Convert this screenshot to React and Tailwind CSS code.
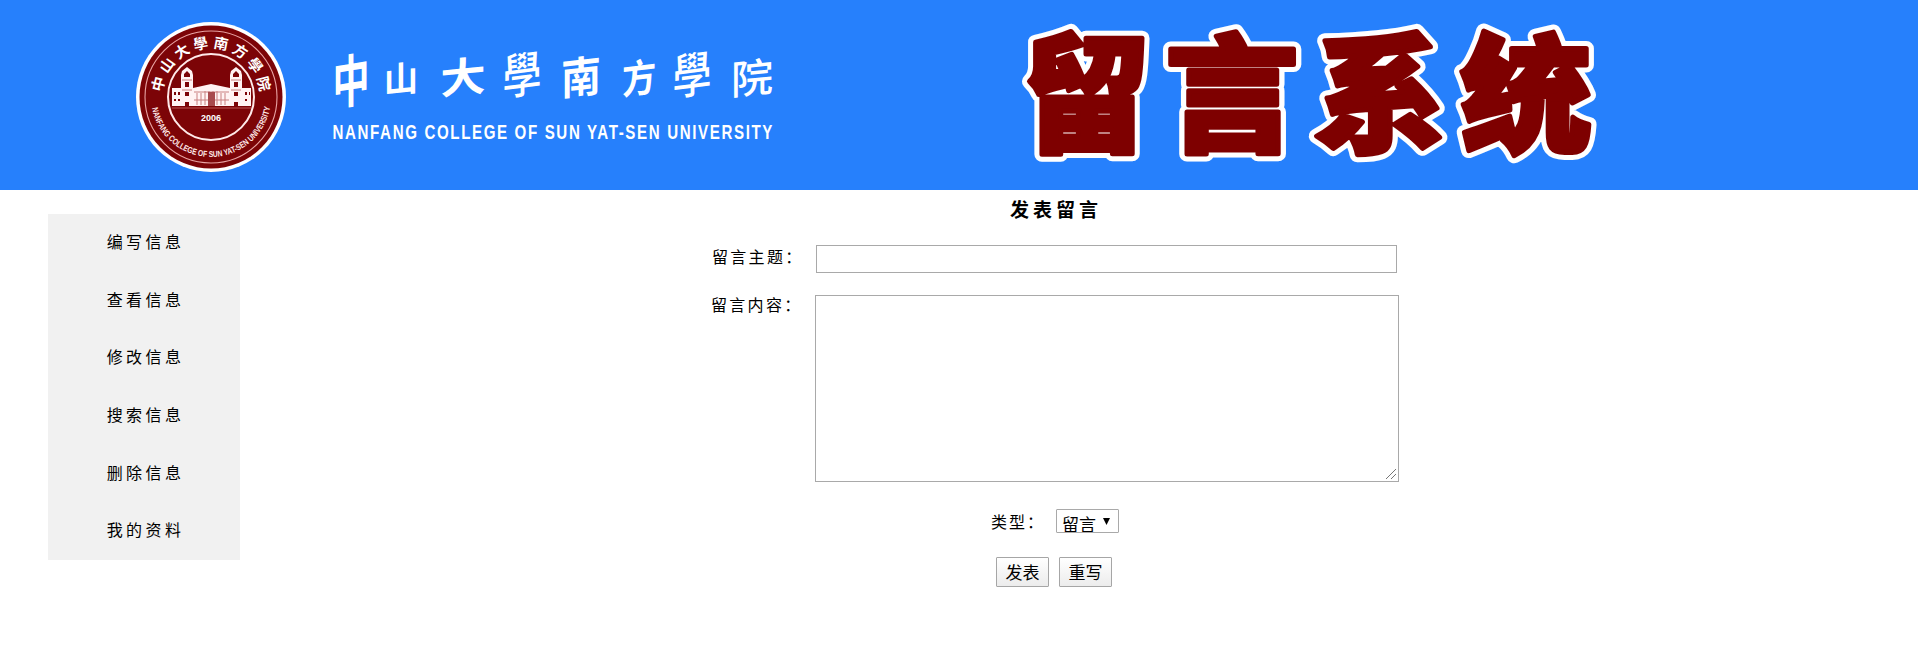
import React from "react";

const menu = ["编写信息", "查看信息", "修改信息", "搜索信息", "删除信息", "我的资料"];

function Seal() {
  return (
    <svg className="block h-[152px] w-[152px]" viewBox="-76 -76 152 152">
      <defs>
        <path id="sealBottom" d="M-60 0 A60 60 0 0 0 60 0" />
      </defs>
      <circle r="75" fill="#fff" />
      <circle r="71.5" fill="#7c0407" />
      <circle r="66" fill="none" stroke="#e9a4a4" strokeWidth="1.1" />
      <circle r="43" fill="#7c0407" stroke="#ffe9e9" strokeWidth="2" />
      {["中", "山", "大", "學", "南", "方", "學", "院"].map((c, i) => (
        <text
          key={i}
          transform={`rotate(${-76 + i * 21.7}) translate(0 -49)`}
          textAnchor="middle"
          fill="#fff"
          fontSize="14.5"
          fontWeight="700"
          fontFamily="Noto Sans CJK TC, sans-serif"
        >
          {c}
        </text>
      ))}
      <text fill="#ffe9e9" fontSize="8.5" fontWeight="700" fontFamily="Liberation Sans, sans-serif">
        <textPath href="#sealBottom" startOffset="11" textLength="167" lengthAdjust="spacingAndGlyphs">
          NANFANG COLLEGE OF SUN YAT-SEN UNIVERSITY
        </textPath>
      </text>
      <path
        fill="#fff3f3"
        d="M-39 -9H-30V-22L-29 -26L-24 -30L-19 -26L-18 -22V-9L0 -13L19 -9V-22L20 -26L25 -30L30 -26L31 -22V-9H40V9H-39Z"
      />
      <g fill="#7c0407">
        <path d="M-27 -20v-3l3-3 3 3v3zM22 -20v-3l3-3 3 3v3z" />
        <path d="M-26 -15h4v5h-4zM23 -15h4v5h-4zM-37 -5h2v3h-2zM-33 -5h2v3h-2zM-37 2h2v2h-2zM-33 2h2v2h-2zM-26 -5h4v4h-4zM-26 5h4v4h-4zM23 -5h4v4h-4zM23 5h4v4h-4zM34 -5h2v3h-2zM38 -5h1v3h-1zM34 2h2v2h-2z" />
      </g>
      <path
        fill="none"
        stroke="#c98080"
        d="M-17 -5H18M-14 -4V8M-10 -4V8M14 -4V8M10 -4V8M-6 -6V8M-2 -6V8M2 -6V8M6 -6V8M-29 -17H-19M20 -17H30M-29 -7H-19M20 -7H30M-17 3H18"
      />
      <path d="M-3 -5H4V9H-3Z" fill="#a84a4d" />
      <path d="M-39 11H40" stroke="#b55" strokeWidth="1" />
      <text y="24" textAnchor="middle" fill="#fff" fontSize="9" fontWeight="700" fontFamily="Liberation Sans, sans-serif">
        2006
      </text>
    </svg>
  );
}

const nameGlyphs = [
  ["中", 31, 81, 39, 0.95, 1.45, 700],
  ["山", 81, 79, 35, 0.98, 1, 700],
  ["大", 143, 77, 42, 1.08, 0.98, 700],
  ["學", 202, 75, 39, 1, 1.25, 500],
  ["南", 261, 77, 38, 1.05, 1.15, 700],
  ["方", 319, 78, 36, 0.95, 1.08, 700],
  ["學", 372, 75, 39, 1, 1.25, 500],
  ["院", 432, 78, 40, 1.05, 1, 500],
];

function SchoolName() {
  return (
    <svg className="block h-[190px] w-[470px]" viewBox="0 0 470 190" fill="#fff">
      {nameGlyphs.map(([c, x, y, size, sx, sy, weight], i) => (
        <text
          key={i}
          transform={`translate(${x} ${y}) scale(${sx} ${sy}) skewY(-6)`}
          y={size * 0.37}
          textAnchor="middle"
          fontSize={size}
          fontWeight={weight}
          fontFamily="Noto Sans CJK TC, sans-serif"
        >
          {c}
        </text>
      ))}
      <text
        transform="translate(12.5 139) scale(0.72 1)"
        fontSize="21"
        fontWeight="700"
        fontFamily="Liberation Sans, sans-serif"
        textLength="611"
        lengthAdjust="spacing"
      >
        NANFANG COLLEGE OF SUN YAT-SEN UNIVERSITY
      </text>
    </svg>
  );
}

const titleGlyphs = [
  ["留", 76, 1],
  ["言", 222, 1.05],
  ["系", 370, 1.04],
  ["统", 516, 1.03],
];

function TitleLayer({ color, width }) {
  return (
    <g fill={color} stroke={color} strokeWidth={width}>
      {titleGlyphs.map(([c, x, sx]) => (
        <text key={c} transform={`translate(${x} 142) scale(${sx} 1)`}>
          {c}
        </text>
      ))}
    </g>
  );
}

function SystemTitle() {
  return (
    <svg
      className="block h-[190px] w-[600px]"
      viewBox="0 0 600 190"
      fontFamily="Noto Sans CJK SC, sans-serif"
      fontWeight="900"
      fontSize="127"
      textAnchor="middle"
      strokeLinejoin="round"
    >
      <TitleLayer color="#fff" width="15" />
      <TitleLayer color="#7e0000" width="5" />
    </svg>
  );
}

export default function App() {
  return (
    <div className="h-[656px] w-[1918px] overflow-hidden bg-white font-['Noto_Sans_CJK_SC',sans-serif] text-black">
      <header className="flex h-[190px] items-start bg-[#2680fc]">
        <div className="ml-[135px] mt-[21px] w-[152px]">
          <Seal />
        </div>
        <div className="ml-[33px]">
          <SchoolName />
        </div>
        <div className="ml-[220px]">
          <SystemTitle />
        </div>
      </header>
      <div className="flex items-start">
        <nav className="ml-12 mt-6 flex h-[346px] w-48 flex-col bg-[#f1f1f1]">
          {menu.map((item) => (
            <a
              key={item}
              href="#"
              className="flex h-[57.6px] items-center justify-center pb-[3px] pl-[3px] text-[16px] leading-6 tracking-[3.4px]"
            >
              {item}
            </a>
          ))}
        </nav>
        <form className="ml-[471px] w-[688px]" onSubmit={(e) => e.preventDefault()}>
          <h2 className="ml-[299px] mt-[7px] h-6 text-[19px] font-bold leading-6 tracking-[4px]">发表留言</h2>
          <div className="mt-6 flex h-7 items-center">
            <label htmlFor="subject" className="w-[104px] whitespace-nowrap pb-1.5 pl-px text-[16px] leading-6 tracking-[2.3px]">
              留言主题：
            </label>
            <input id="subject" className="ml-px h-7 w-[581px] border border-[#a9a9a9] bg-white px-1 outline-none" />
          </div>
          <div className="mt-[22px] flex items-start">
            <label htmlFor="content" className="mt-[-3px] w-[104px] whitespace-nowrap text-[16px] leading-6 tracking-[2.3px]">
              留言内容：
            </label>
            <div className="relative h-[187px] w-[584px]">
              <textarea id="content" className="block h-full w-full resize-none border border-[#a9a9a9] bg-white p-1 outline-none" />
              <svg className="absolute bottom-[3px] right-[3px] h-[10px] w-[10px]" viewBox="0 0 10 10" stroke="#666" strokeWidth="0.9">
                <path d="M0 10L10 0M5 10L10 5" />
              </svg>
            </div>
          </div>
          <div className="ml-[280px] mt-[27px] flex h-6 items-center">
            <label className="w-[65px] whitespace-nowrap text-[16px] leading-6 tracking-[2px]">类型：</label>
            <button type="button" className="flex h-6 w-[63px] items-start rounded-[1px] border border-[#a9a9a9] bg-white pl-[5px]">
              <span className="h-[22px] overflow-hidden text-[17px] leading-[27px]">留言</span>
              <svg className="ml-[7px] mt-2 h-[7px] w-[7px]" viewBox="0 0 7 7">
                <path d="M0 0H7L3.5 7Z" />
              </svg>
            </button>
          </div>
          <div className="ml-[285px] mt-6 flex gap-2.5">
            {["发表", "重写"].map((label) => (
              <button
                key={label}
                type="button"
                className="h-[30px] w-[53px] rounded-[1px] border border-[#a6a6a6] bg-linear-to-b from-white to-[#ececec] text-[17px] leading-7"
              >
                {label}
              </button>
            ))}
          </div>
        </form>
      </div>
    </div>
  );
}
